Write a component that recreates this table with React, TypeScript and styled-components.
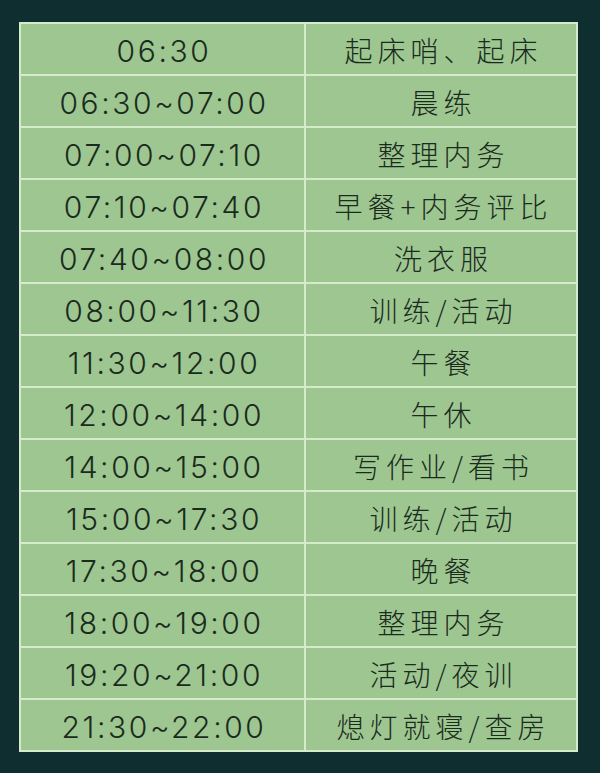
import React from "react";
import styled, { createGlobalStyle } from "styled-components";

const Global = createGlobalStyle`
  html, body { margin: 0; padding: 0; background: #0e2e2f; }
  body { font-family: "Noto Sans CJK SC", "Noto Sans", sans-serif; }
`;

const Page = styled.div`
  width: 600px;
  height: 773px;
  box-sizing: border-box;
  background: #0e2e2f;
  padding: 22px 22px 0 19px;
`;

const Table = styled.div`
  box-sizing: border-box;
  width: 559px;
  display: grid;
  grid-template-columns: 283px 1fr;
  grid-auto-rows: 50px;
  gap: 2px;
  border: 2px solid #d6ebcb;
  background: #d6ebcb;
`;

const Cell = styled.div<{ $time?: boolean }>`
  background: #9ec691;
  color: #1a2b1d;
  display: flex;
  align-items: center;
  justify-content: center;
  font-family: ${(p) =>
    p.$time
      ? `Inter, "Noto Sans CJK SC", sans-serif`
      : `"Noto Sans CJK SC", sans-serif`};
  font-weight: 300;
  font-size: ${(p) => (p.$time ? "30px" : "28px")};
  letter-spacing: ${(p) => (p.$time ? "2.6px" : "5px")};
  padding-left: ${(p) => (p.$time ? "3px" : "5px")};
  padding-top: ${(p) => (p.$time ? "4px" : "2px")};
  line-height: 1;
`;

const rows: [string, string][] = [
  ["06:30", "起床哨、起床"],
  ["06:30~07:00", "晨练"],
  ["07:00~07:10", "整理内务"],
  ["07:10~07:40", "早餐+内务评比"],
  ["07:40~08:00", "洗衣服"],
  ["08:00~11:30", "训练/活动"],
  ["11:30~12:00", "午餐"],
  ["12:00~14:00", "午休"],
  ["14:00~15:00", "写作业/看书"],
  ["15:00~17:30", "训练/活动"],
  ["17:30~18:00", "晚餐"],
  ["18:00~19:00", "整理内务"],
  ["19:20~21:00", "活动/夜训"],
  ["21:30~22:00", "熄灯就寝/查房"],
];

export default function App() {
  return (
    <>
      <Global />
      <Page>
        <Table>
          {rows.map(([t, a], i) => (
            <React.Fragment key={i}>
              <Cell $time>{t}</Cell>
              <Cell>{a}</Cell>
            </React.Fragment>
          ))}
        </Table>
      </Page>
    </>
  );
}
